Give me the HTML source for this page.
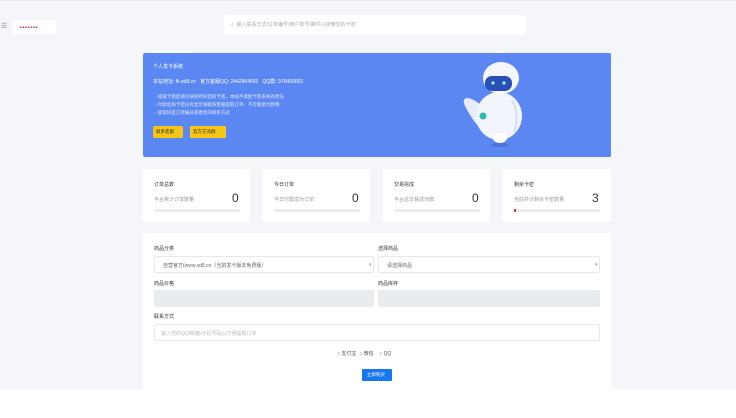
<!DOCTYPE html>
<html><head><meta charset="utf-8"><style>
*{margin:0;padding:0;box-sizing:border-box}
body{width:736px;height:418px;background:#fff;font-family:"Liberation Sans","Noto Sans CJK SC",sans-serif;position:relative;overflow:hidden;color:#333}
.a{position:absolute}
.t{font-size:5px;white-space:nowrap}
.card{background:#fff;border-radius:2px}
.bar{background:#e9ecef;height:3px;border-radius:2px}
.in{background:#fff;border:1px solid #e6e8ec;border-radius:2px}
.gr{background:#e9ecef;border-radius:2px}
</style></head><body>
<div class="a" style="left:0;top:0;width:736px;height:389px;background:#f4f6fa"></div>
<div class="a" style="left:0;top:0;width:736px;height:1px;background:#e8eaee"></div>
<div class="a t" style="left:1px;top:22px;font-size:7px;color:#888">☰</div>
<div class="a" style="left:12px;top:20px;width:44px;height:14px;background:#fff"></div>
<div class="a t" style="left:20px;top:25px;color:#c33;font-size:3px">■ ■ ■ ■ ■ ■ ■</div>
<div class="a" style="left:224px;top:15px;width:302px;height:20px;background:#fff;border-radius:2px"></div>
<div class="a t" style="left:231px;top:21px;color:#aaa;font-size:5px">⌕ &nbsp;输入联系方式/订单编号/用户单号/邮件以搜索您的卡密</div>
<div class="a" style="left:143px;top:53px;width:468px;height:104px;background:#5a87f1;border-radius:2px"></div>
<div class="a t" style="left:153px;top:63px;color:#fff">个人发卡系统</div>
<div class="a t" style="left:153px;top:78px;color:#fff">本站地址: fk.sd8.cn &nbsp; 官方客服QQ: 2442964003 &nbsp; QQ群: 976400003</div>
<div class="a t" style="left:155px;top:93px;color:#e6ecff;line-height:8px;font-size:4.5px">◦ 提取卡密后请尽快保存好您的卡密，本站不承担卡密丢失的责任<br>◦ 付款后如卡密没有显示请联系客服提取订单，不可重复付款哦<br>◦ 提取码是订单编号或者您的联系方式</div>
<div class="a" style="left:153px;top:126px;width:30px;height:12px;background:#f5c518;border-radius:1px"></div>
<div class="a t" style="left:156px;top:129px;font-size:4.5px">联系客服</div>
<div class="a" style="left:190px;top:126px;width:36px;height:12px;background:#f5c518;border-radius:1px"></div>
<div class="a t" style="left:193px;top:129px;font-size:4.5px">官方交流群</div>
<svg class="a" style="left:460px;top:58px" width="65" height="92" viewBox="0 0 65 92">
<ellipse cx="40" cy="87" rx="9" ry="2" fill="#4a73d6"/>
<path d="M6 40 Q2 42 5 48 Q12 62 20 70 L24 50 Q14 40 6 40Z" fill="#e6ecf9"/>
<ellipse cx="39" cy="58" rx="23" ry="24" fill="#f2f5fc"/>
<path d="M52 42 Q60 55 54 75" stroke="#d6def0" stroke-width="2" fill="none"/>
<circle cx="23" cy="58" r="3.5" fill="#2cb8b0"/>
<ellipse cx="41" cy="20" rx="18" ry="16" fill="#f4f7fd"/>
<rect x="25" y="18" width="27" height="15" rx="7" fill="#2a4fb8"/>
<circle cx="33" cy="25" r="1.6" fill="#8fd"/><circle cx="44" cy="25" r="1.6" fill="#8fd"/>
<ellipse cx="40" cy="80" rx="7" ry="5" fill="#fff"/>
</svg>
<div class="a card" style="left:143px;top:169px;width:107px;height:53px"></div>
<div class="a card" style="left:263px;top:169px;width:107px;height:53px"></div>
<div class="a card" style="left:383px;top:169px;width:107px;height:53px"></div>
<div class="a card" style="left:503px;top:169px;width:108px;height:53px"></div>
<div class="a t" style="left:154px;top:181px">订单总数</div><div class="a t" style="left:154px;top:196px;color:#999">平台累计订单数量:</div><div class="a" style="left:232px;top:191px;font-size:12px">0</div><div class="a bar" style="left:154px;top:209px;width:86px"></div>
<div class="a t" style="left:274px;top:181px">今日订单</div><div class="a t" style="left:274px;top:196px;color:#999">今日付款成功订单:</div><div class="a" style="left:352px;top:191px;font-size:12px">0</div><div class="a bar" style="left:274px;top:209px;width:86px"></div>
<div class="a t" style="left:394px;top:181px">交易完成</div><div class="a t" style="left:394px;top:196px;color:#999">平台总交易成功数:</div><div class="a" style="left:472px;top:191px;font-size:12px">0</div><div class="a bar" style="left:394px;top:209px;width:86px"></div>
<div class="a t" style="left:514px;top:181px">剩余卡密</div><div class="a t" style="left:514px;top:196px;color:#999">当前共计剩余卡密数量:</div><div class="a" style="left:592px;top:191px;font-size:12px">3</div><div class="a bar" style="left:514px;top:209px;width:86px"></div><div class="a" style="left:514px;top:209px;width:2px;height:3px;background:#e33"></div>
<div class="a card" style="left:143px;top:233px;width:468px;height:156px"></div>
<div class="a t" style="left:154px;top:245px">商品分类</div>
<div class="a t" style="left:378px;top:245px">选择商品</div>
<div class="a in" style="left:154px;top:256px;width:220px;height:17px"></div>
<div class="a t" style="left:163px;top:262px;color:#666">自营官方(www.sd8.cn（当前发卡版本免费版）</div><div class="a t" style="left:369px;top:262px;color:#999">▾</div>
<div class="a in" style="left:378px;top:256px;width:222px;height:17px"></div>
<div class="a t" style="left:387px;top:262px;color:#666">请选择商品</div><div class="a t" style="left:595px;top:262px;color:#999">▾</div>
<div class="a t" style="left:154px;top:280px">商品价格</div>
<div class="a t" style="left:378px;top:280px">商品库存</div>
<div class="a gr" style="left:154px;top:290px;width:220px;height:17px"></div>
<div class="a gr" style="left:378px;top:290px;width:222px;height:17px"></div>
<div class="a t" style="left:154px;top:313px">联系方式</div>
<div class="a in" style="left:154px;top:324px;width:446px;height:17px"></div>
<div class="a t" style="left:161px;top:330px;color:#bbb">输入您的QQ/邮箱/手机号码以方便提取订单</div>
<div class="a t" style="left:337px;top:350px;color:#555">○ 支付宝 &nbsp;○ 微信 &nbsp;&nbsp; ○ QQ</div>
<div class="a" style="left:362px;top:369px;width:30px;height:12px;background:#1677f0;border-radius:1px"></div>
<div class="a t" style="left:367px;top:372px;color:#fff;font-size:4.5px">立即购买</div>
</body></html>
